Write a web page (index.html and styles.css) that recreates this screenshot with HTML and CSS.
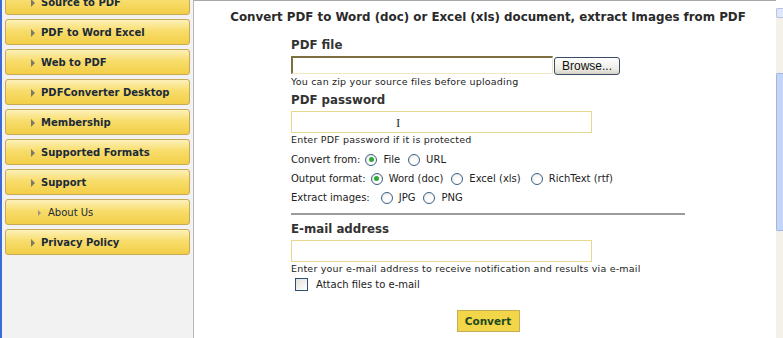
FILE: index.html
```html
<!DOCTYPE html>
<html>
<head>
<meta charset="utf-8">
<link rel="stylesheet" href="styles.css">
</head>
<body>
<div class="page">
  <div class="sidebar">
    <ul class="menu">
      <li class="btn"><span class="arrow"></span>Source to PDF</li>
      <li class="btn"><span class="arrow"></span>PDF to Word Excel</li>
      <li class="btn"><span class="arrow"></span>Web to PDF</li>
      <li class="btn"><span class="arrow"></span>PDFConverter Desktop</li>
      <li class="btn"><span class="arrow"></span>Membership</li>
      <li class="btn"><span class="arrow"></span>Supported Formats</li>
      <li class="btn"><span class="arrow"></span>Support</li>
      <li class="btn sub"><span class="arrow"></span>About Us</li>
      <li class="btn"><span class="arrow"></span>Privacy Policy</li>
    </ul>
  </div>
  <div class="content">
    <h1 class="title">Convert PDF to Word (doc) or Excel (xls) document, extract Images from PDF</h1>
    <div class="form">
      <div class="label">PDF file</div>
      <div class="filerow">
        <div class="fileinput"></div>
        <div class="browse">Browse...</div>
      </div>
      <div class="hint">You can zip your source files before uploading</div>
      <div class="label">PDF password</div>
      <div class="textinput"><span class="cursor">I</span></div>
      <div class="hint">Enter PDF password if it is protected</div>
      <div class="optrow">
        <span class="optlabel">Convert from:</span>
        <span class="radio on"></span><span class="opt">File</span>
        <span class="radio"></span><span class="opt">URL</span>
      </div>
      <div class="optrow">
        <span class="optlabel">Output format:</span>
        <span class="radio on"></span><span class="opt">Word (doc)</span>
        <span class="radio"></span><span class="opt tight">Excel (xls)</span>
        <span class="radio"></span><span class="opt">RichText (rtf)</span>
      </div>
      <div class="optrow">
        <span class="optlabel wide">Extract images:</span>
        <span class="radio"></span><span class="opt">JPG</span>
        <span class="radio"></span><span class="opt">PNG</span>
      </div>
      <div class="rule"></div>
      <div class="label">E-mail address</div>
      <div class="textinput"></div>
      <div class="hint">Enter your e-mail address to receive notification and results via e-mail</div>
      <div class="checkrow"><span class="check"></span><span class="opt">Attach files to e-mail</span></div>
      <div class="submitrow"><div class="convert">Convert</div></div>
    </div>
  </div>
  <div class="scroll">
    <div class="sc-top"></div>
    <div class="sc-up"></div>
    <div class="sc-track"><div class="sc-thumb"></div></div>
  </div>
</div>
</body>
</html>
```
FILE: styles.css
```css
html, body { margin: 0; padding: 0; background: #fff; }
.page {
  display: flex;
  width: 783px;
  height: 338px;
  overflow: hidden;
  font-family: "DejaVu Sans", Verdana, sans-serif;
}
.sidebar {
  width: 188px;
  flex: none;
  background: #f2f2f2;
  border-left: 2px solid #3a6bd6;
  border-right: 1px solid #b8b8b8;
  padding-left: 3px;
  overflow: hidden;
}
.menu {
  list-style: none;
  margin: -11px 0 0 0;
  padding: 0;
  display: flex;
  flex-direction: column;
  gap: 4px;
}
.btn {
  box-sizing: border-box;
  width: 185px;
  height: 26px;
  border: 1px solid #c8a955;
  border-radius: 3px;
  background: linear-gradient(#fdf1ba, #f8dd6c 45%, #f3cf48);
  display: flex;
  align-items: center;
  padding-left: 25px;
  font-size: 10px;
  font-weight: bold;
  color: #1b2a3a;
  padding-top: 1px;
}
.btn.sub { padding-left: 32px; font-weight: normal; }
.arrow {
  width: 0; height: 0;
  border-left: 4px solid #7d7a6a;
  border-top: 4px solid transparent;
  border-bottom: 4px solid transparent;
  margin-right: 6px;
}
.sub .arrow { border-left-width: 3px; border-top-width: 3px; border-bottom-width: 3px; border-left-color: #9a9686; margin-right: 7px; }
.content {
  flex: 1;
  border-top: 1px solid #a8a8a8;
  background: #fff;
  padding-left: 6px;
}
.title {
  margin: 9px 0 0 0;
  text-align: center;
  font-size: 11.85px;
  font-weight: bold;
  color: #2a2a2a;
  line-height: 14px;
}
.form {
  width: 394px;
  margin: 0 auto;
  padding-top: 13px;
  color: #222;
}
.label {
  font-size: 11.8px;
  font-weight: bold;
  color: #333;
  line-height: 16px;
}
.filerow { display: flex; align-items: flex-start; margin-top: 3px; }
.fileinput {
  width: 259px;
  height: 15px;
  border-top: 2px solid #7d7040;
  border-left: 2px solid #7d7040;
  border-right: 1px solid #efe6c2;
  border-bottom: 1px solid #efe6c2;
}
.browse {
  box-sizing: border-box;
  width: 66px;
  height: 18px;
  margin-left: 1px;
  margin-top: 1px;
  border: 1px solid #3c4a6a;
  border-radius: 3px;
  background: linear-gradient(#ffffff, #ecebe4 70%, #d6d2c4);
  font-family: "Liberation Sans", Arial, sans-serif;
  font-size: 12px;
  color: #111;
  text-align: center;
  line-height: 16px;
}
.hint {
  font-size: 9.5px;
  letter-spacing: 0.2px;
  color: #222;
  line-height: 12px;
  margin-top: 1px;
  margin-bottom: 4px;
}
.textinput {
  box-sizing: border-box;
  width: 301px;
  height: 22px;
  border: 1px solid #e6d98e;
  margin-top: 3px;
  position: relative;
}
.cursor {
  position: absolute;
  left: 104px;
  top: 4px;
  font-family: "Liberation Serif", serif;
  font-size: 13px;
  color: #333;
  line-height: 13px;
}
.optrow {
  display: flex;
  align-items: center;
  height: 19px;
  font-size: 10px;
}
.optlabel { margin-right: 5px; }
.optlabel.wide { margin-right: 11px; }
.radio {
  box-sizing: border-box;
  width: 12px;
  height: 12px;
  border-radius: 50%;
  border: 1px solid #3a5f86;
  background: radial-gradient(circle at 60% 65%, #ffffff 30%, #e4e3dc 100%);
  display: flex;
  align-items: center;
  justify-content: center;
  margin-right: 6px;
}
.radio.on::after {
  content: "";
  width: 5px;
  height: 5px;
  border-radius: 50%;
  background: #2fa834;
}
.opt { margin-right: 8px; }
.opt.tight { margin-right: 10px; }
.rule {
  height: 2px;
  background: #9c9c9c;
  margin: 6px 0 6px 0;
}
.checkrow {
  display: flex;
  align-items: flex-end;
  font-size: 10px;
  margin-top: -1px;
  padding-left: 4px;
  line-height: 12px;
}
.check {
  box-sizing: border-box;
  width: 13px;
  height: 13px;
  border: 1px solid #2f4f72;
  background: linear-gradient(135deg, #e2e1da, #ffffff);
  margin-right: 8px;
}
.submitrow {
  display: flex;
  justify-content: center;
  margin-top: 19px;
}
.convert {
  box-sizing: border-box;
  width: 63px;
  height: 22px;
  background: #f3d54a;
  border: 1px solid #c5ad55;
  font-size: 10.5px;
  font-weight: bold;
  color: #1e4a1e;
  text-align: center;
  line-height: 20px;
}
.scroll {
  width: 7px;
  flex: none;
  display: flex;
  flex-direction: column;
  background: #f3f1ea;
}
.sc-top { height: 8px; background: #fff; }
.sc-up {
  height: 8px;
  border: 1px solid #b4c4e6;
  border-right: none;
  background: #dfe7f8;
  border-radius: 2px 0 0 2px;
}
.sc-track { flex: 1; padding-top: 55px; }
.sc-thumb {
  height: 156px;
  background: #c6d4f6;
  border: 1px solid #a3b6e2;
  border-right: none;
  border-radius: 2px 0 0 2px;
}
```
